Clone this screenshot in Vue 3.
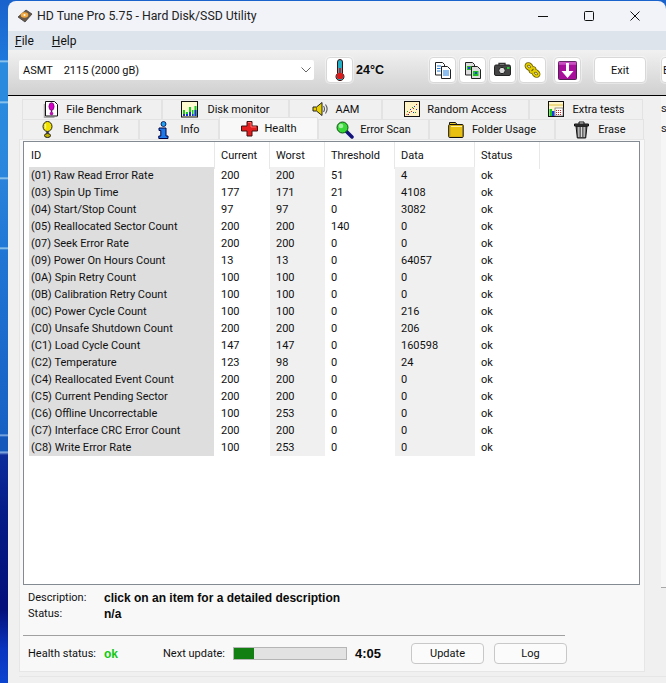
<script setup>
const icons = {
  file: '<path d="M2.500 3v13.500h10" fill="none" stroke="#aaa" stroke-width="1.500"/><path d="M3.500 .5h9l3 3v11.500h-12z" fill="#fff" stroke="#111"/><ellipse cx="9.500" cy="5.500" rx="2.600" ry="3.800" fill="#d400c8" stroke="#600060" stroke-width=".7"/><path d="M9.500 9v2" stroke="#8a008a" stroke-width="1.400"/><circle cx="9.500" cy="12.500" r="1.500" fill="#d400c8" stroke="#600060" stroke-width=".5"/>',
  monitor: '<rect x=".5" y=".5" width="16" height="15.500" fill="#fffbd0" stroke="#111"/><path d="M2 15V9h2v6zM5 15V11h2v4zM8 15V6h2v9zM11 15V9h1.500v6zM13.500 15V5h2v10z" fill="#16d020"/><path d="M2 15v-2h2v2zM5 15v-2h2v2zM8 15v-4h2v4zM11 15v-2h1.500v2zM13.500 15v-6h2v6z" fill="#1530d8"/>',
  speaker: '<path d="M1 6h3.500L10 1.500v13L4.500 10H1z" fill="#e8d000" stroke="#222"/><path d="M4.500 6v4" stroke="#806000"/><path d="M11.500 5q2 3 0 6M13.500 3.500q3.200 4.500 0 9" fill="none" stroke="#555" stroke-width="1.100"/>',
  random: '<rect x=".5" y=".5" width="15" height="15" fill="#fff3c4" stroke="#111"/><path d="M12 3h1v1h-1zM9 7h1v1H9zM5 11h1v1H5zM7 10h1v1H7zM2.500 13h1v1h-1z" fill="#d81818"/><path d="M10 5h1v1h-1zM12 8h1v1h-1zM6 8h1v1H6zM9 11h1v1H9zM4 13h1v1H4z" fill="#2030d0"/><path d="M8 6h1v1H8zM11 11h1v1h-1zM3 10h1v1H3z" fill="#20a030"/>',
  extra: '<rect x=".5" y=".5" width="15" height="15" fill="#fff6cc" stroke="#111"/><path d="M1 4h14" stroke="#e0c040"/><path d="M1.500 8h2.500v7H1.500z" fill="#18c818"/><path d="M4 10h2.500v5H4z" fill="#1838e0"/><rect x="7" y="7" width="8" height="8" fill="#fff" stroke="#555" stroke-width=".6"/><path d="M8 9h1v1H8zM10 9h1v1h-1zM12 9h1v1h-1zM8 11h1v1H8zM10 11h1v1h-1zM12 11h1v1h-1zM8 13h1v1H8zM10 13h1v1h-1zM12 13h1v1h-1z" fill="#d02020"/>',
  bench: '<ellipse cx="5.500" cy="5.500" rx="4.500" ry="5" fill="#f0e000" stroke="#222"/><path d="M3.500 3v4.500" stroke="#fff8a0" stroke-width="1.300"/><path d="M5.500 10.500v2" stroke="#333" stroke-width="2.500"/><ellipse cx="5.500" cy="14.500" rx="3" ry="2" fill="#c0b000" stroke="#222"/>',
  info: '<circle cx="5.500" cy="3" r="2.500" fill="#20a0f0" stroke="#000040" stroke-width=".8"/><path d="M1 7h7v8h2v2.500H.8V15h2V9.500H1z" fill="#1e78e8" stroke="#000040"/>',
  cross: '<path d="M6 1.500h5v4.500h5.500v5H11v5H6v-5H.5V6H6z" fill="#e41e1e" stroke="#401010"/><path d="M7 2.500h3v4.500h5" fill="none" stroke="#ff7070"/>',
  scan: '<path d="M10 10l6 6" stroke="#12127a" stroke-width="3.500" stroke-linecap="round"/><circle cx="6.500" cy="6.500" r="5.500" fill="#38d838" stroke="#0c5010"/><circle cx="5" cy="5" r="2.300" fill="#a0f0a0"/>',
  folder: '<path d="M1.500 3.500v-2h6l1.500 2" fill="#e8c830" stroke="#111"/><rect x=".7" y="3.500" width="14.500" height="13" rx="1" fill="#d8b010" stroke="#111"/><path d="M3 5.500h11v9.500H3z" fill="#e8c010"/><path d="M3 5.500h11" stroke="#fff0a0"/>',
  trash: '<path d="M3 5h11l-1.300 12H4.300z" fill="#6a6a6a" stroke="#111"/><path d="M5.800 6v10M8.500 6v10M11.200 6v10" stroke="#d8d8d8"/><path d="M1.500 3h14v2h-14z" fill="#444" stroke="#111"/><path d="M6 3V1h5v2" fill="none" stroke="#111"/>',
  thermo: '<path d="M5.500 1.500a2.500 2.500 0 0 1 5 0V13a4 4 0 1 1-5 0z" transform="translate(0 1.500)" fill="#20b0c8" stroke="#401010"/><path d="M7 9h2v6H7z" fill="#e01818"/><circle cx="8" cy="17" r="3.300" fill="#e01818"/>',
  copy: '<path d="M1.500 .5h7l2 2v10.500h-9z" fill="#fff" stroke="#222"/><path d="M7.500 4.500h6l3 3v9h-9z" fill="#fff" stroke="#222"/><path d="M3 4h4M3 6.500h3.500M3 9h3.500" stroke="#2080e0"/><path d="M9 9h6M9 11h6M9 13h6" stroke="#2080e0" stroke-width="1.200"/>',
  copy2: '<path d="M1.500 .5h7l2 2v10.500h-9z" fill="#ddd" stroke="#222"/><path d="M7.500 4.500h6l3 3v9h-9z" fill="#ddd" stroke="#222"/><rect x="3" y="4" width="4" height="4" fill="#1cc020"/><rect x="9" y="9" width="5.500" height="5" fill="#1cc020"/><rect x="4" y="5" width="2" height="2" fill="#2040e0"/><rect x="11" y="10" width="2" height="2" fill="#2040e0"/>',
  camera: '<path d="M5 3V1.500h6V3" fill="none" stroke="#333" stroke-width="1.300"/><rect x=".5" y="3" width="16" height="10.500" rx="1.500" fill="#444" stroke="#222"/><circle cx="8" cy="8.500" r="3.200" fill="#ddd" stroke="#222"/><rect x="13" y="5" width="2.500" height="2" fill="#1cd030"/>',
  gold: '<g fill="none"><g stroke="#6a5a00" stroke-width="3.400"><ellipse cx="5" cy="4.500" rx="3" ry="2.200" transform="rotate(40 5 4.500)"/><ellipse cx="12" cy="11.500" rx="3" ry="2.200" transform="rotate(40 12 11.500)"/><ellipse cx="8.500" cy="8" rx="2.500" ry="1.500" transform="rotate(-45 8.500 8)"/></g><g stroke="#e0cc00" stroke-width="1.800"><ellipse cx="5" cy="4.500" rx="3" ry="2.200" transform="rotate(40 5 4.500)"/><ellipse cx="12" cy="11.500" rx="3" ry="2.200" transform="rotate(40 12 11.500)"/><ellipse cx="8.500" cy="8" rx="2.500" ry="1.500" transform="rotate(-45 8.500 8)"/></g></g>',
  down: '<rect x=".5" y=".5" width="18" height="18" rx="1" fill="#a8109c" stroke="#502050"/><path d="M.8 .8h17.500v3H.8z" fill="#c850c0"/><path d="M8 2h3v8h4.500l-6 7-6-7H8z" fill="#fff"/>'
}
const tabsTop = [
  { label: 'File Benchmark', icon: 'file', w: 17 },
  { label: 'Disk monitor', icon: 'monitor', w: 17 },
  { label: 'AAM', icon: 'speaker', w: 17 },
  { label: 'Random Access', icon: 'random', w: 16 },
  { label: 'Extra tests', icon: 'extra', w: 16 }
]
const tabsBottom = [
  { label: 'Benchmark', icon: 'bench', w: 11 },
  { label: 'Info', icon: 'info', w: 11 },
  { label: 'Health', icon: 'cross', w: 17, active: true },
  { label: 'Error Scan', icon: 'scan', w: 18 },
  { label: 'Folder Usage', icon: 'folder', w: 16 },
  { label: 'Erase', icon: 'trash', w: 17 }
]
const tools = ['copy', 'copy2', 'camera', 'gold']
const rows = [
  ['(01) Raw Read Error Rate', 200, 200, 51, 4],
  ['(03) Spin Up Time', 177, 171, 21, 4108],
  ['(04) Start/Stop Count', 97, 97, 0, 3082],
  ['(05) Reallocated Sector Count', 200, 200, 140, 0],
  ['(07) Seek Error Rate', 200, 200, 0, 0],
  ['(09) Power On Hours Count', 13, 13, 0, 64057],
  ['(0A) Spin Retry Count', 100, 100, 0, 0],
  ['(0B) Calibration Retry Count', 100, 100, 0, 0],
  ['(0C) Power Cycle Count', 100, 100, 0, 216],
  ['(C0) Unsafe Shutdown Count', 200, 200, 0, 206],
  ['(C1) Load Cycle Count', 147, 147, 0, 160598],
  ['(C2) Temperature', 123, 98, 0, 24],
  ['(C4) Reallocated Event Count', 200, 200, 0, 0],
  ['(C5) Current Pending Sector', 200, 200, 0, 0],
  ['(C6) Offline Uncorrectable', 100, 253, 0, 0],
  ['(C7) Interface CRC Error Count', 200, 200, 0, 0],
  ['(C8) Write Error Rate', 100, 253, 0, 0]
]
const heads = ['ID', 'Current', 'Worst', 'Threshold', 'Data', 'Status']
</script>

<template>
  <div class="desktop">
    <div class="window">
      <div class="titlebar">
        <svg class="app-icon" width="16" height="16" viewBox="0 0 16 16"><path d="M1 9 9 2l6 4-7 8z" fill="#6a5a48" stroke="#333" stroke-width=".7"/><ellipse cx="7.500" cy="7" rx="3.800" ry="2.800" fill="#f0a840"/><circle cx="7.500" cy="7" r="1" fill="#fff"/></svg>
        <span class="title">HD Tune Pro 5.75 - Hard Disk/SSD Utility</span>
        <div class="win-controls">
          <svg width="12" height="12" viewBox="0 0 12 12"><path d="M1 6.500h10" stroke="#111"/></svg>
          <svg width="12" height="12" viewBox="0 0 12 12"><rect x="1.500" y="1.500" width="9" height="9" rx="1" fill="none" stroke="#111"/></svg>
          <svg width="12" height="12" viewBox="0 0 12 12"><path d="M1.500 1.500l9 9M10.500 1.500l-9 9" stroke="#111"/></svg>
        </div>
      </div>
      <div class="menubar">
        <span><u>F</u>ile</span>
        <span><u>H</u>elp</span>
      </div>
      <div class="toolbar">
        <div class="select">
          <span>ASMT&nbsp;&nbsp;&nbsp; 2115 (2000 gB)</span>
          <svg width="12" height="8" viewBox="0 0 12 8"><path d="M1.500 1.500 6 6l4.500-4.500" fill="none" stroke="#666"/></svg>
        </div>
        <button class="tool thermo-btn"><svg width="16" height="22" viewBox="0 0 16 22" v-html="icons.thermo"></svg></button>
        <b class="temp">24°C</b>
        <div class="tool-group">
          <button v-for="t in tools" :key="t" class="tool"><svg width="17" height="17" viewBox="0 0 17 17" v-html="icons[t]"></svg></button>
        </div>
        <button class="tool down-btn"><svg width="19" height="19" viewBox="0 0 19 19" v-html="icons.down"></svg></button>
        <button class="tool exit-btn">Exit</button>
        <button class="tool clip-btn">E</button>
      </div>
      <div class="body">
        <div class="tabs-area">
          <div class="tabs top-tabs">
            <div v-for="t in tabsTop" :key="t.label" class="tab">
              <svg :width="t.w" height="17" :viewBox="`0 0 ${t.w} 17`" v-html="icons[t.icon]"></svg>
              <span>{{ t.label }}</span>
            </div>
          </div>
          <div class="tabs bottom-tabs">
            <div v-for="t in tabsBottom" :key="t.label" class="tab" :class="{ active: t.active }">
              <svg :width="t.w" height="18" :viewBox="`0 0 ${t.w} 18`" v-html="icons[t.icon]"></svg>
              <span>{{ t.label }}</span>
            </div>
          </div>
          <div class="panel">
            <div class="list">
              <div class="row head">
                <div v-for="h in heads" :key="h" class="cell">{{ h }}</div>
              </div>
              <div v-for="r in rows" :key="r[0]" class="row">
                <div class="cell id">{{ r[0] }}</div>
                <div class="cell">{{ r[1] }}</div>
                <div class="cell alt">{{ r[2] }}</div>
                <div class="cell">{{ r[3] }}</div>
                <div class="cell alt">{{ r[4] }}</div>
                <div class="cell">ok</div>
              </div>
            </div>
            <div class="desc">
              <span>Description:</span><b>click on an item for a detailed description</b>
              <span>Status:</span><b>n/a</b>
            </div>
            <div class="rule"></div>
            <div class="status">
              <span class="st-label">Health status:</span>
              <b class="ok">ok</b>
              <span class="next">Next update:</span>
              <div class="progress"><div class="fill"></div></div>
              <b class="time">4:05</b>
              <button class="btn update">Update</button>
              <button class="btn">Log</button>
            </div>
          </div>
          <div class="foot-line"></div>
        </div>
        <div class="edge">
          <div class="edge-inner">
            <span>s</span>
            <span>se</span>
          </div>
        </div>
      </div>
    </div>
  </div>
</template>

<style>
html, body { margin: 0; height: 683px; overflow: hidden; }
</style>

<style scoped>
.desktop {
  width: 666px;
  height: 683px;
  overflow: hidden;
  background: linear-gradient(180deg,
    #1a62cc 0, #1f78dc 60px, #a6d4f0 61px, #2a8ade 63px,
    #2a8ade 101px, #a6d4f0 102px, #2a8ade 104px,
    #2a86dc 177px, #a6d4f0 178px, #2a82da 180px,
    #2278d6 247px, #a6d4f0 248px, #2076d4 250px,
    #1660c4 434px, #90b8e8 435px, #1458bc 437px,
    #1458bc 451px, #90b8e8 452px, #0c2c9c 455px,
    #041a84 520px, #04107c 610px, #0a36c0 650px, #0c44d0 683px);
  font: 11px Roboto, "Liberation Sans", sans-serif;
  color: #111;
  padding: 1px 0 0 8px;
  box-sizing: border-box;
}
b { font-family: "Liberation Sans", Arial, sans-serif; font-size: 12px; color: #0a0a0a; }
.window { width: 658px; height: 682px; display: flex; flex-direction: column; }
.titlebar {
  height: 30px;
  flex: none;
  background: #f1f3f9;
  border-radius: 8px 8px 0 0;
  display: flex;
  align-items: center;
  padding-left: 9px;
  gap: 4px;
  font-size: 12.300px;
}
.title { color: #222; }
.win-controls { margin-left: auto; display: flex; gap: 34px; padding-right: 25px; margin-top: -1px; }
.menubar {
  height: 19px;
  flex: none;
  background: #dde4ec;
  display: flex;
  align-items: center;
  gap: 18px;
  padding-left: 7px;
  margin-right: -8px;
  font-size: 12px;
}
.toolbar {
  height: 46px;
  flex: none;
  box-sizing: border-box;
  background: linear-gradient(180deg, #f1f1f1, #d0d0d0);
  border-bottom: 1px solid #000;
  margin-right: -8px;
  display: flex;
  align-items: flex-start;
  padding: 7px 0 0 11px;
}
.select {
  flex: none;
  width: 295px;
  height: 20px;
  margin-top: 3px;
  background: #fff;
  border-radius: 2px;
  display: flex;
  align-items: center;
  justify-content: space-between;
  padding: 0 2px 0 4px;
  box-sizing: border-box;
}
.tool {
  flex: none;
  width: 27px;
  height: 26px;
  box-sizing: border-box;
  background: #fff;
  border: 1px solid #d8d8d8;
  border-radius: 4px;
  padding: 0;
  display: flex;
  align-items: center;
  justify-content: center;
  font: inherit;
  color: #111;
  box-shadow: 0 0 0 1px rgba(255, 255, 255, .4);
}
.thermo-btn { margin-left: 12px; }
.temp { flex: none; margin: 6px 0 0 3px; width: 46px; font-size: 12.500px; line-height: 15px; }
.tool-group { flex: none; display: flex; gap: 3px; margin-left: 27px; }
.down-btn { margin-left: 8px; }
.exit-btn { width: 52px; margin-left: 13px; }
.clip-btn { width: 20px; margin-left: 15px; justify-content: flex-start; border-radius: 4px 0 0 4px; padding-left: 1px; }
.body { flex: 1; display: flex; background: #f0f0f0; margin-right: -8px; min-height: 0; }
.tabs-area { flex: none; width: 637px; padding: 3px 0 0 11px; box-sizing: border-box; }
.edge { flex: 1; background: #f0f0f0; overflow: hidden; }
.edge-inner {
  margin-left: 16px;
  height: 492px;
  box-sizing: border-box;
  background: #f6f6f6;
  border-bottom: 1px solid #a8a8a8;
  display: flex;
  flex-direction: column;
  padding-top: 3px;
  line-height: 20px;
  color: #222;
  white-space: nowrap;
}
.tabs { display: grid; height: 20px; padding-left: 3px; }
.top-tabs { grid-template-columns: 140px 127px 93px 147px 114px; }
.bottom-tabs { grid-template-columns: 117px 80px 99px 111px 126px 89px; }
.tab {
  display: flex;
  align-items: center;
  justify-content: center;
  gap: 7px;
  background: #f0f0f0;
  border: 1px solid #e3e3e3;
  border-bottom: 0;
  box-sizing: border-box;
}
.top-tabs .tab:nth-child(2) { gap: 9px; }
.top-tabs .tab:nth-child(5) { gap: 9px; }
.bottom-tabs .tab:nth-child(1) { gap: 10px; }
.bottom-tabs .tab:nth-child(2) { gap: 11px; }
.bottom-tabs .tab:nth-child(4) { gap: 6px; }
.bottom-tabs .tab:nth-child(5) { gap: 8px; }
.bottom-tabs .tab:nth-child(6) { gap: 8px; }
.tab.active {
  background: #f8f8f8;
  position: relative;
  height: 22px;
  margin-top: -2px;
  z-index: 1;
}
.panel {
  width: 626px;
  height: 533px;
  box-sizing: border-box;
  background: #f8f8f8;
  border: 1px solid #e6e6e6;
  padding: 1px 4px 0 3px;
  display: flex;
  flex-direction: column;
}
.foot-line { position: relative; z-index: 1; width: 647px; height: 1px; margin-top: 4px; background: #e6e6e6; }
.list {
  height: 444px;
  flex: none;
  box-sizing: border-box;
  border: 1px solid #838a92;
  background: #fff;
}
.row {
  display: grid;
  grid-template-columns: 191px 55px 55px 70px 80px 65px;
  height: 17px;
  line-height: 17px;
}
.head { height: 25px; line-height: 27px; }
.head .cell { border-right: 1px solid #e8e8e8; }
.head .cell:first-child { padding-left: 7px; }
.cell { padding-left: 6px; box-sizing: border-box; white-space: nowrap; }
.cell.id { background: #dedede; margin-left: 5px; padding-left: 2px; margin-right: 1px; }
.cell.alt { background: #f0f0f0; }
.desc {
  display: grid;
  grid-template-columns: 76px 1fr;
  line-height: 16px;
  padding: 5px 0 0 5px;
  height: 46px;
  flex: none;
  box-sizing: border-box;
  align-content: start;
}
.rule { height: 1px; width: 542px; flex: none; background: #a0a0a0; margin-top: 4px; }
.status { display: flex; align-items: center; height: 21px; padding-left: 5px; margin-top: 7px; }
.st-label { width: 76px; flex: none; }
.ok { color: #12c812; width: 59px; flex: none; }
.next { width: 70px; flex: none; }
.progress { flex: none; width: 114px; height: 13px; box-sizing: border-box; background: #e2e2e2; border: 1px solid #b5b5b5; }
.fill { width: 20px; height: 100%; background: #117f11; }
.time { width: 56px; flex: none; margin-left: 8px; font-size: 13px; }
.btn {
  width: 73px;
  height: 21px;
  box-sizing: border-box;
  background: #fbfbfb;
  border: 1px solid #c8c8c8;
  border-radius: 4px;
  font: inherit;
  color: #111;
  padding: 0;
  flex: none;
}
.update { margin-right: 10px; }
</style>
